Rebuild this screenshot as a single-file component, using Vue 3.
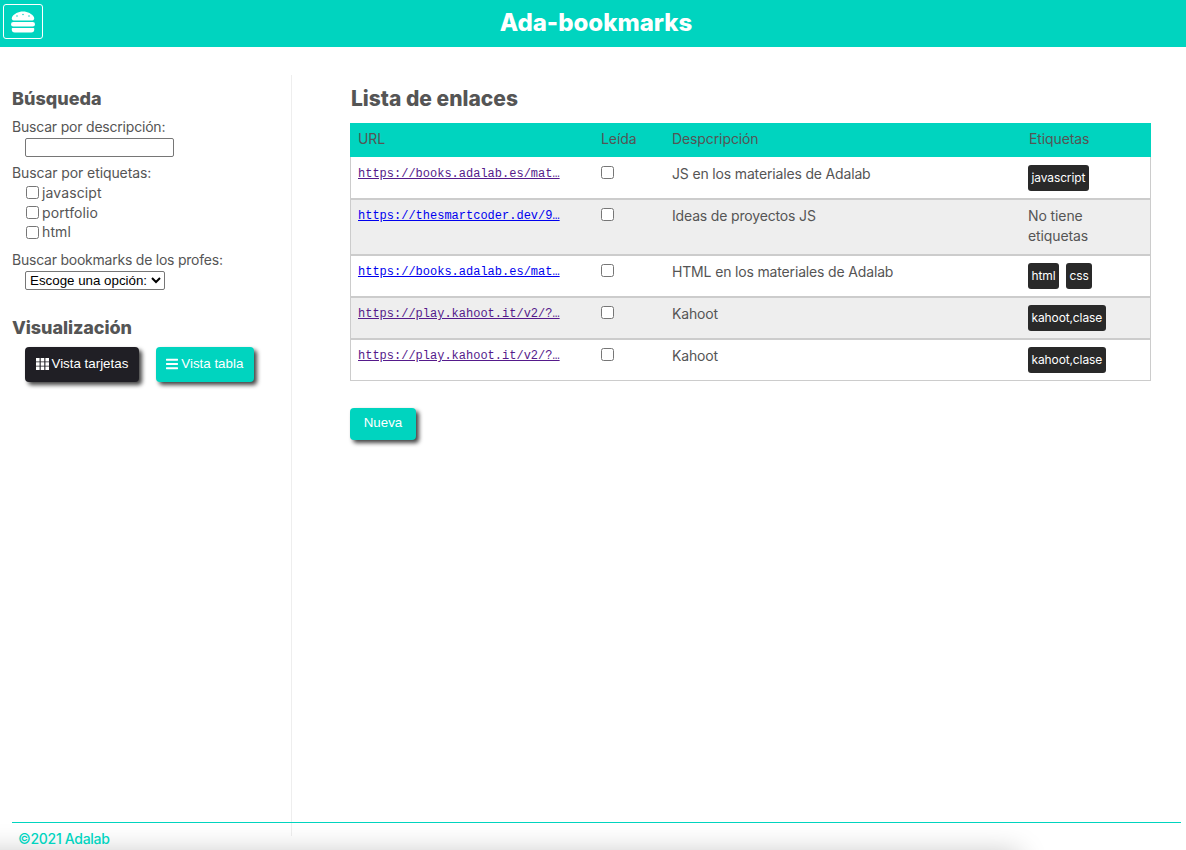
<template>
  <div class="page">
    <header class="topbar">
      <button class="burger" aria-label="menu">
        <svg viewBox="0 0 512 512" width="24" height="24"><path fill="#fff" :d="burgerPath" /></svg>
      </button>
      <h1>Ada-bookmarks</h1>
    </header>

    <div class="content">
      <aside class="sidebar">
        <h2>Búsqueda</h2>
        <label class="field-label">Buscar por descripción:</label>
        <div class="indent"><input class="search" type="text" /></div>

        <label class="field-label tags-label">Buscar por etiquetas:</label>
        <div class="checks">
          <label v-for="tag in searchTags" :key="tag"><input type="checkbox" />{{ tag }}</label>
        </div>

        <label class="field-label profes">Buscar bookmarks de los profes:</label>
        <div class="indent">
          <select class="profes-select"><option>Escoge una opción:</option></select>
        </div>

        <h2 class="view-title">Visualización</h2>
        <div class="view-buttons">
          <button class="btn dark">
            <svg viewBox="0 0 13 12" width="13" height="12"><path fill="#fff" d="M0 0h3.6v3.4H0zM4.7 0h3.6v3.4H4.7zM9.4 0H13v3.4H9.4zM0 4.3h3.6v3.4H0zM4.7 4.3h3.6v3.4H4.7zM9.4 4.3H13v3.4H9.4zM0 8.6h3.6V12H0zM4.7 8.6h3.6V12H4.7zM9.4 8.6H13V12H9.4z" /></svg>
            Vista tarjetas
          </button>
          <button class="btn">
            <svg viewBox="0 0 448 512" width="12" height="14"><path fill="#fff" d="M16 132h416c8.837 0 16-7.163 16-16V76c0-8.837-7.163-16-16-16H16C7.163 60 0 67.163 0 76v40c0 8.837 7.163 16 16 16zm0 160h416c8.837 0 16-7.163 16-16v-40c0-8.837-7.163-16-16-16H16c-8.837 0-16 7.163-16 16v40c0 8.837 7.163 16 16 16zm0 160h416c8.837 0 16-7.163 16-16v-40c0-8.837-7.163-16-16-16H16c-8.837 0-16 7.163-16 16v40c0 8.837 7.163 16 16 16z" /></svg>
            Vista tabla
          </button>
        </div>
      </aside>

      <main class="main">
        <h2 class="list-title">Lista de enlaces</h2>
        <table class="links">
          <colgroup>
            <col style="width: 243px" />
            <col style="width: 71px" />
            <col style="width: 357px" />
            <col style="width: 130px" />
          </colgroup>
          <thead>
            <tr>
              <th>URL</th>
              <th>Leída</th>
              <th>Despcripción</th>
              <th>Etiquetas</th>
            </tr>
          </thead>
          <tbody>
            <tr v-for="(row, i) in rows" :key="i" :style="{ height: row.height + 'px' }">
              <td><a href="#" class="url" :class="{ visited: row.visited }">{{ row.url }}</a></td>
              <td><input type="checkbox" class="read" /></td>
              <td>{{ row.desc }}</td>
              <td>
                <template v-if="row.tags.length">
                  <span v-for="tag in row.tags" :key="tag" class="tag">{{ tag }}</span>
                </template>
                <template v-else>No tiene etiquetas</template>
              </td>
            </tr>
          </tbody>
        </table>
        <button class="btn nueva">Nueva</button>
      </main>
    </div>

    <footer class="footer">©2021 Adalab</footer>
  </div>
</template>

<script setup>
const burgerPath = 'M464 256H48a48 48 0 0 0 0 96h416a48 48 0 0 0 0-96zm16 128H32a16 16 0 0 0-16 16v16a64 64 0 0 0 64 64h352a64 64 0 0 0 64-64v-16a16 16 0 0 0-16-16zM58.64 224h394.72c34.57 0 54.62-43.9 34.82-75.88C448 83.2 359.55 32.1 256 32c-103.54.1-192 51.2-232.18 116.11C4 180.09 24.07 224 58.64 224zM384 112a16 16 0 1 1-16 16 16 16 0 0 1 16-16zM256 80a16 16 0 1 1-16 16 16 16 0 0 1 16-16zm-128 32a16 16 0 1 1-16 16 16 16 0 0 1 16-16z'

const searchTags = ['javascipt', 'portfolio', 'html']

// the urls are already cut the way the list shows them
const rows = [
  { url: 'https://books.adalab.es/mat…', visited: true, desc: 'JS en los materiales de Adalab', tags: ['javascript'], height: 43 },
  { url: 'https://thesmartcoder.dev/9…', visited: false, desc: 'Ideas de proyectos JS', tags: [], height: 56 },
  { url: 'https://books.adalab.es/mat…', visited: false, desc: 'HTML en los materiales de Adalab', tags: ['html', 'css'], height: 42 },
  { url: 'https://play.kahoot.it/v2/?…', visited: true, desc: 'Kahoot', tags: ['kahoot,clase'], height: 42 },
  { url: 'https://play.kahoot.it/v2/?…', visited: true, desc: 'Kahoot', tags: ['kahoot,clase'], height: 41 }
]
</script>

<style>
html,
body {
  margin: 0;
  overflow: hidden;
}
</style>

<style scoped>
.page {
  position: relative;
  height: 850px;
  overflow: hidden;
  background: #fff;
  color: #555;
  font-family: "Inter", "Liberation Sans", sans-serif;
  font-size: 14px;
  line-height: 20px;
}

.page::after {
  content: '';
  position: absolute;
  left: -40px;
  top: 852px;
  width: 1060px;
  height: 40px;
  box-shadow: 0 0 28px rgba(0, 0, 0, .22);
}

.topbar {
  position: relative;
  height: 47px;
  padding-left: 6px;
  box-sizing: border-box;
  background: #00d4bf;
  display: flex;
  justify-content: center;
  align-items: center;
}

.topbar h1 {
  margin: 0 0 2px;
  color: #fff;
  font-size: 24px;
  font-weight: 800;
  line-height: 30px;
}

.burger {
  position: absolute;
  left: 3px;
  top: 4px;
  width: 40px;
  height: 35px;
  padding: 0;
  background: transparent;
  border: 1px solid #fff;
  border-radius: 3px;
  display: flex;
  justify-content: center;
  align-items: center;
}

.content {
  display: flex;
  margin: 28px 35px 0 12px;
  height: 761px;
}

.sidebar {
  width: 279px;
  border-right: 1px solid #eee;
  padding-top: 13px;
  box-sizing: content-box;
}

h2 {
  margin: 0;
  font-size: 18px;
  line-height: 22px;
  font-weight: 800;
  color: #555;
}

.field-label {
  display: block;
  margin-top: 7px;
  letter-spacing: -.2px;
}

.indent {
  padding-left: 13px;
  margin-top: 1px;
  display: flex;
}

.search {
  width: 149px;
  height: 19px;
  box-sizing: border-box;
  padding: 1px 2px;
  border: 1px solid #767676;
  border-radius: 2px;
}

.tags-label {
  margin-top: 6px;
  letter-spacing: -.1px;
}

.checks {
  display: flex;
  flex-direction: column;
  padding-left: 14px;
}

.checks label {
  display: flex;
  align-items: center;
  height: 19.7px;
  gap: 3px;
  letter-spacing: .12px;
}

.checks input {
  margin: 0;
}

.profes {
  margin-top: 8px;
  letter-spacing: -.23px;
}

.profes-select {
  width: 140px;
  height: 19px;
  font-family: "Liberation Sans", sans-serif;
  font-size: 13.33px;
  color: #000;
  background: #fff;
  border: 1px solid #767676;
  border-radius: 2px;
}

.view-title {
  margin-top: 27px;
  letter-spacing: -.08px;
}

.view-buttons {
  display: flex;
  gap: 17px;
  padding-left: 13px;
  margin-top: 8px;
}

.btn {
  display: flex;
  align-items: center;
  justify-content: center;
  gap: 3px;
  height: 35px;
  padding: 0 10.5px 2px;
  background: #00d4bf;
  color: #fff;
  border: none;
  border-radius: 4px;
  font-family: "Liberation Sans", sans-serif;
  font-size: 13.33px;
  box-shadow: 3px 3px 4px #444;
}

.btn.dark {
  background: #201f25;
}

.main {
  margin-left: 58px;
  width: 801px;
  padding-top: 13px;
}

.list-title {
  font-size: 21px;
  margin-left: 1px;
}

.links {
  width: 801px;
  margin-top: 13px;
  table-layout: fixed;
  border-collapse: separate;
  border-spacing: 0;
}

th {
  height: 34px;
  padding: 0 8px 2px;
  box-sizing: border-box;
  background: #00d4bf;
  color: #555;
  font-weight: 400;
  text-align: left;
  letter-spacing: -.1px;
}

td {
  padding: 6px 8px 0;
  vertical-align: top;
  border-bottom: 2px solid #ccc;
  letter-spacing: -.16px;
}

tbody tr:first-child td {
  padding-top: 7px;
}

td:first-child {
  padding-left: 7px;
  border-left: 1px solid #ccc;
}

td:last-child {
  padding-left: 7px;
  border-right: 1px solid #ccc;
  letter-spacing: -.1px;
}

tbody tr:last-child td {
  border-bottom-width: 1px;
}

tbody tr:nth-child(even) {
  background: #eee;
}

.url {
  display: block;
  white-space: nowrap;
  font-family: "Liberation Mono", monospace;
  font-size: 12px;
  line-height: 20px;
  letter-spacing: 0;
  color: #00e;
}

.url.visited {
  color: #551a8b;
}

.read {
  display: block;
  margin: 2px 0 0;
}

.tag {
  display: inline-block;
  margin: 1px 7px 0 0;
  padding: 3px 3.5px;
  background: #292929;
  color: #fff;
  border-radius: 3px;
  font-size: 12px;
  letter-spacing: -.12px;
}

.nueva {
  margin-top: 27px;
  width: 66px;
  height: 32px;
  padding: 0 0 4px;
}

.footer {
  position: relative;
  z-index: 1;
  margin: -14px 5px 0 12px;
  height: 27px;
  padding: 6px 0 0 6px;
  box-sizing: border-box;
  border-top: 1px solid #00d4bf;
  color: #00d4bf;
  font-weight: 500;
  letter-spacing: -.3px;
}
</style>
